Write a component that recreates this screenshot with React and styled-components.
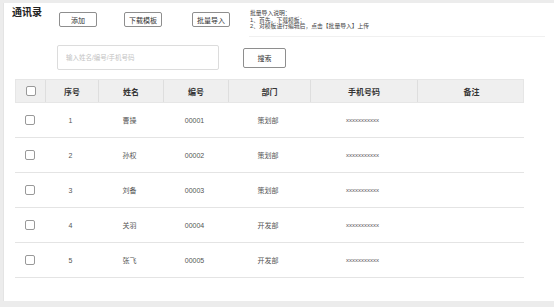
import React from 'react';
import styled, { createGlobalStyle } from 'styled-components';

const GlobalStyle = createGlobalStyle`
  html, body {
    margin: 0;
    padding: 0;
    background: #ececec;
    font-family: "Liberation Sans", "Noto Sans CJK SC", sans-serif;
    color: #333;
  }
`;

const contacts = [
  { seq: 1, name: '曹操', no: '00001', dept: '策划部' },
  { seq: 2, name: '孙权', no: '00002', dept: '策划部' },
  { seq: 3, name: '刘备', no: '00003', dept: '策划部' },
  { seq: 4, name: '关羽', no: '00004', dept: '开发部' },
  { seq: 5, name: '张飞', no: '00005', dept: '开发部' },
];

const cols = '29px 53px 65px 65px 82px 107px 108px';

const App = () => {
  return (
    <>
      <GlobalStyle />
      <Panel>
        <Header>
          <Title>通讯录</Title>
          <Button $left={17}>添加</Button>
          <Button $left={27}>下载模板</Button>
          <Button $left={30}>批量导入</Button>
          <Notes>
            <span>批量导入说明：</span>
            <span>1、首先，下载模板；</span>
            <span>2、对模板进行编辑后，点击【批量导入】上传</span>
          </Notes>
        </Header>
        <SearchBar>
          <SearchInput placeholder="输入姓名/编号/手机号码" />
          <SearchButton>搜索</SearchButton>
        </SearchBar>
        <Table>
          <HeadRow>
            <HeadCell><Check /></HeadCell>
            <HeadCell>序号</HeadCell>
            <HeadCell>姓名</HeadCell>
            <HeadCell>编号</HeadCell>
            <HeadCell>部门</HeadCell>
            <HeadCell>手机号码</HeadCell>
            <HeadCell>备注</HeadCell>
          </HeadRow>
          {contacts.map((item) => (
            <Row key={item.seq}>
              <Cell><Check /></Cell>
              <Cell>{item.seq}</Cell>
              <Cell>{item.name}</Cell>
              <Cell>{item.no}</Cell>
              <Cell>{item.dept}</Cell>
              <Cell $small>xxxxxxxxxxx</Cell>
              <Cell></Cell>
            </Row>
          ))}
        </Table>
      </Panel>
    </>
  );
};

const Panel = styled.div`
  margin: 3px 0 0 3px;
  height: 298px;
  background: #fff;
  border-left: 1px solid #e4e4e4;
  box-sizing: border-box;
`;

const Header = styled.div`
  display: flex;
  align-items: flex-start;
  height: 34px;
  padding: 3px 0 0 8px;
  box-sizing: border-box;
`;

const Title = styled.div`
  font-size: 10px;
  font-weight: bold;
  color: #222;
  line-height: 12px;
  margin-top: 1px;
  width: 30px;
`;

const Button = styled.div`
  margin-left: ${(p) => p.$left}px;
  margin-top: 6px;
  width: 38px;
  height: 15px;
  border: 1px solid #8e8e8e;
  border-radius: 2px;
  box-sizing: border-box;
  display: flex;
  align-items: center;
  justify-content: center;
  font-size: 7px;
  color: #333;
`;

const Notes = styled.div`
  margin-left: 19px;
  margin-top: 4px;
  display: flex;
  flex-direction: column;
  font-size: 5.8px;
  line-height: 6.6px;
  color: #444;
  width: 295px;
  padding-left: 1px;
  padding-bottom: 6px;
  border-bottom: 1px solid #f0f0f0;
`;

const SearchBar = styled.div`
  display: flex;
  align-items: center;
  padding: 7px 0 0 53px;
  height: 34px;
  box-sizing: border-box;
`;

const SearchInput = styled.input`
  width: 162px;
  height: 25px;
  box-sizing: border-box;
  border: 1px solid #dcdcdc;
  border-radius: 2px;
  padding: 0 8px;
  font-size: 6.5px;
  font-family: inherit;
  outline: none;
  &::placeholder {
    color: #c4c4c4;
  }
`;

const SearchButton = styled.div`
  margin-left: 24px;
  width: 43px;
  height: 20px;
  border: 1px solid #8e8e8e;
  border-radius: 2px;
  box-sizing: border-box;
  display: flex;
  align-items: center;
  justify-content: center;
  font-size: 7px;
`;

const Table = styled.div`
  margin: 8px 0 0 11px;
  width: 509px;
`;

const HeadRow = styled.div`
  display: grid;
  grid-template-columns: ${cols};
  height: 24px;
  background: #efefef;
  border: 1px solid #e6e6e6;
  box-sizing: border-box;
`;

const HeadCell = styled.div`
  display: flex;
  align-items: center;
  justify-content: center;
  font-size: 8px;
  font-weight: bold;
  color: #333;
  border-left: 1px solid #dedede;
  &:first-child {
    border-left: none;
  }
`;

const Row = styled.div`
  display: grid;
  grid-template-columns: ${cols};
  height: 35px;
  border-bottom: 1px solid #e4e4e4;
  box-sizing: border-box;
`;

const Cell = styled.div`
  display: flex;
  align-items: center;
  justify-content: center;
  font-size: ${(p) => (p.$small ? '6px' : '7px')};
  color: #555;
`;

const Check = styled.span`
  width: 10px;
  height: 10px;
  border: 1px solid #999;
  border-radius: 2px;
  box-sizing: border-box;
  background: #fff;
`;

export default App;
